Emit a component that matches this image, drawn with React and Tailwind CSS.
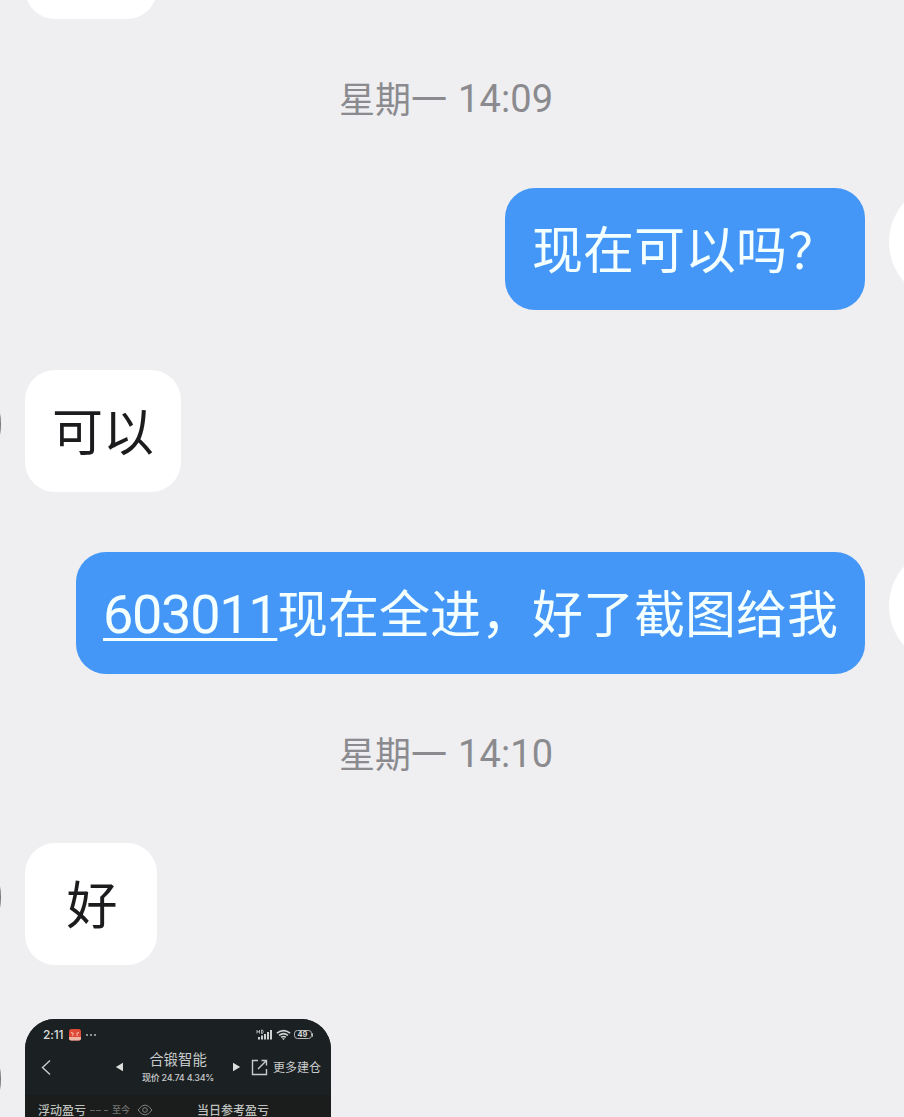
import React from 'react';

const CJK = "font-['Noto_Sans_CJK_SC',sans-serif]";

function Digits({ children, className = '' }) {
  return <span className={`font-['Roboto','Noto_Sans_CJK_SC',sans-serif] ${className}`}>{children}</span>;
}

function Timestamp({ day, time, className }) {
  return (
    <div className={`flex shrink-0 items-start pl-[339px] text-[36px] leading-[48px] text-[#8b8b8f] ${className}`}>
      <span className="w-[108px]">{day}</span>
      <Digits className="ml-[11px] text-[38px] leading-[52px] font-normal tracking-[0.1px]">{time}</Digits>
    </div>
  );
}

function Sent({ children, className }) {
  return (
    <div className="flex h-[122px] shrink-0 justify-end">
      <div className={`h-[122px] rounded-[30px] bg-[#4497f7] pl-[27px] text-[51px] leading-[118px] whitespace-nowrap text-[#f4ffff] ${className}`}>
        {children}
      </div>
      <div className="mt-[-6px] mr-[-105px] ml-6 size-[120px] shrink-0 rounded-full bg-white" />
    </div>
  );
}

function LeftAvatar({ className = 'mt-[-6px]' }) {
  return <div className={`ml-[-119.2px] mr-[24.2px] size-[120px] shrink-0 rounded-full bg-[#77777a] ${className}`} />;
}

function Received({ children, className }) {
  return (
    <div className="flex h-[122px] shrink-0">
      <LeftAvatar />
      <div className={`h-[122px] rounded-[30px] bg-white text-center text-[51px] leading-[118px] text-[#1c1c1e] ${className}`}>
        {children}
      </div>
    </div>
  );
}

function StatusBar() {
  return (
    <div className="flex h-[30px] items-center pt-[1px] pl-[18px] pr-[18px] text-[#d8dada]">
      <span className="w-[26px] font-['Inter',sans-serif] text-[12px] font-medium tracking-[-0.2px]">2:11</span>
      <svg width="12" height="12" viewBox="0 0 12 12">
        <rect width="12" height="11.5" rx="2.5" fill="#df4a38" />
        <path d="M2 3.5l2.5 1M10 3.5l-2.5 1M3 6h1.5M7.5 6H9" stroke="#ffd8c8" strokeWidth="1" />
        <path d="M0 8h12v1.5a2 2 0 0 1-2 2H2a2 2 0 0 1-2-2z" fill="#edb5a5" />
      </svg>
      <svg className="ml-[4px]" width="12" height="4" viewBox="0 0 12 4" fill="#c8caca">
        <circle cx="2" cy="2" r=".9" />
        <circle cx="6" cy="2" r=".9" />
        <circle cx="10" cy="2" r=".9" />
      </svg>
      <svg className="ml-auto" width="17" height="12" viewBox="0 0 17 12">
        <path d="M1 1v3.5M3.5 1v3.5M1 2.8h2.5M5.5 1v3.5h1q1.5-1.75 0-3.5z" fill="none" stroke="#d0d2d2" strokeWidth=".8" />
        <path d="M3 10.5V8M6 10.5V6.5M9 10.5V5M12 10.5V3M15 10.5V1" stroke="#d0d2d2" strokeWidth="2" />
      </svg>
      <svg className="ml-[3px]" width="15" height="12" viewBox="0 0 16 12" fill="none" stroke="#d0d2d2">
        <path d="M1 4q7-5.5 14 0M3.3 6.4q4.7-3.7 9.4 0M5.5 8.6q2.5-2 5 0" strokeWidth="1.8" />
        <path d="M6.5 9.5l1.5 2 1.5-2z" fill="#d0d2d2" stroke="none" />
      </svg>
      <span className="ml-[3px] flex h-[9.5px] w-[18px] items-center justify-center rounded-[3.5px] border border-[#b9bbbb] font-['Inter',sans-serif] text-[7.5px] leading-none font-bold">49</span>
      <span className="h-[4px] w-[1.5px] rounded-r bg-[#b9bbbb]" />
    </div>
  );
}

function TitleBar() {
  return (
    <div className="flex h-[46px] items-start text-[#c9cccc]">
      <svg className="mt-[10px] ml-[15px]" width="12" height="17" viewBox="0 0 12 17" fill="none" stroke="currentColor" strokeWidth="1.4">
        <path d="M10 1.5L2.5 8.5L10 15.5" />
      </svg>
      <svg className="mt-[13px] ml-[63px]" width="9" height="10" viewBox="0 0 9 10" fill="#dcdedc">
        <path d="M8 .8v8.4L.8 5z" />
      </svg>
      <div className="ml-[14px] flex w-[80px] flex-col items-center whitespace-nowrap">
        <span className="text-[14.4px] leading-[20px]">合锻智能</span>
        <span className="mt-[1px] font-['Inter','Noto_Sans_CJK_SC',sans-serif] text-[9px] leading-[16px] font-medium tracking-[-0.24px]">现价 24.74 4.34%</span>
      </div>
      <svg className="mt-[13px] ml-[14px]" width="9" height="10" viewBox="0 0 9 10" fill="#dcdedc">
        <path d="M1 .8v8.4L8.2 5z" />
      </svg>
      <svg className="mt-[10px] ml-[10px]" width="17" height="17" viewBox="0 0 17 17" fill="none" stroke="currentColor" strokeWidth="1.4">
        <path d="M7 1.5H1.5v14h14V10M7 10L15.5 1.5M10.5 1.5h5v5" />
      </svg>
      <span className="mt-[9px] ml-[5px] text-[12px] leading-[18px] whitespace-nowrap">更多建仓</span>
    </div>
  );
}

function TradeCard() {
  return (
    <div className="h-[160px] w-[306px] overflow-hidden rounded-[30px] bg-[#1b1d1c]">
      <div className="bg-[#1b2022]">
        <StatusBar />
        <TitleBar />
      </div>
      <div className="flex h-[28px] items-center pt-[1px] pl-[13px] text-[12px] font-medium whitespace-nowrap text-[#bfc1bf]">
        <span className="w-[51px]">浮动盈亏</span>
        <svg width="20" height="4" viewBox="0 0 20 4" stroke="#656765" strokeWidth="1">
          <path d="M1 2.5h5M7 2.5h5M15 2.5h4" />
        </svg>
        <span className="ml-[3px] text-[9px] text-[#717371]">至今</span>
        <svg className="ml-[7px]" width="16" height="12" viewBox="0 0 16 12" fill="none" stroke="#7d7f7d">
          <path d="M1 6Q8-4 15 6Q8 16 1 6z" />
          <circle cx="8" cy="6" r="2.3" />
        </svg>
        <span className="ml-[44px]">当日参考盈亏</span>
      </div>
    </div>
  );
}

export default function App() {
  return (
    <main className={`flex h-[1117px] w-[904px] flex-col overflow-hidden bg-[#efeff2] ${CJK}`}>
      <div className="ml-[25px] mt-[-103px] h-[122px] w-[132px] shrink-0 rounded-[30px] bg-white" />
      <Timestamp day="星期一" time="14:09" className="h-[169px] pt-[54px]" />
      <Sent className="w-[360px]">
        现在可以吗<span className="ml-[1px] inline-block origin-left text-[49px] leading-none [font-feature-settings:'palt']">？</span>
      </Sent>
      <div className="h-[60px] shrink-0" />
      <Received className="w-[156px]">可以</Received>
      <div className="h-[60px] shrink-0" />
      <Sent className="w-[789px]">
        <Digits className="inline-block w-[174px] text-[54px] leading-none font-normal tracking-[-1.3px] underline decoration-[3px] underline-offset-[5px]">603011</Digits>
        现在全进，好了截图给我
      </Sent>
      <Timestamp day="星期一" time="14:10" className="h-[169px] pt-[54px]" />
      <Received className="w-[132px] pl-[2px]">好</Received>
      <div className="flex shrink-0 pt-[54px]">
        <LeftAvatar className="mt-0" />
        <TradeCard />
      </div>
    </main>
  );
}
